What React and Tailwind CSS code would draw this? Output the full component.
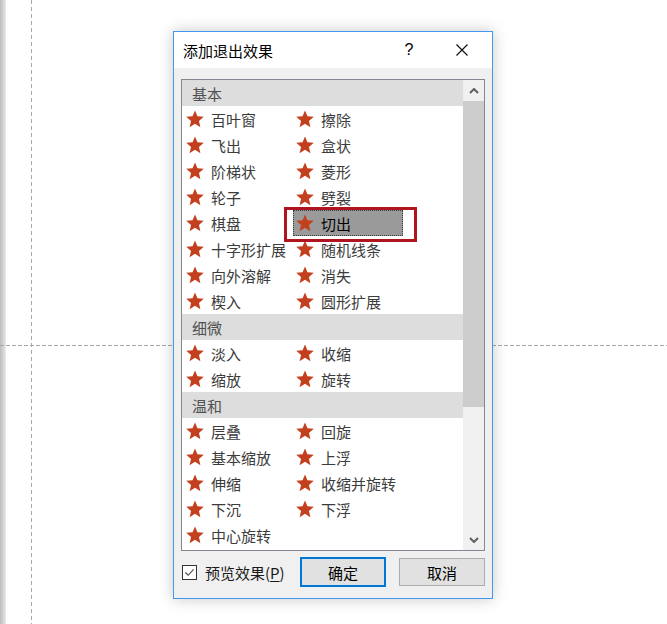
// App.jsx
const FONT = "font-['Microsoft_YaHei','Noto_Sans_CJK_SC',sans-serif]";

const groups = [
  {
    title: "基本",
    items: ["百叶窗", "擦除", "飞出", "盒状", "阶梯状", "菱形", "轮子", "劈裂", "棋盘", "切出", "十字形扩展", "随机线条", "向外溶解", "消失", "楔入", "圆形扩展"],
  },
  { title: "细微", items: ["淡入", "收缩", "缩放", "旋转"] },
  { title: "温和", items: ["层叠", "回旋", "基本缩放", "上浮", "伸缩", "收缩并旋转", "下沉", "下浮", "中心旋转"] },
];

const Star = () => (
  <svg viewBox="0 0 16 16" className="w-[18px] h-[18px] shrink-0 -ml-px">
    <polygon
      points="8,0.4 10.17,5.61 15.8,6.07 11.52,9.74 12.82,15.23 8,12.3 3.18,15.23 4.48,9.74 0.2,6.07 5.83,5.61"
      fill="#c3401f"
    />
  </svg>
);

const Chevron = ({ down }) => (
  <svg viewBox="0 0 10 6" className="w-[10px] h-[6px]">
    <polyline
      points={down ? "1,1 5,5 9,1" : "1,5 5,1 9,5"}
      fill="none"
      stroke="#5f5f5f"
      strokeWidth="2"
    />
  </svg>
);

const Item = ({ label }) => {
  const selected = label === "切出";
  return (
    <div
      className={
        "h-[26px] w-[110px] flex items-center gap-[7px] pl-1 " +
        (selected ? "bg-[#9a9a9a] outline-1 outline-dotted outline-[#3a3a3a] -outline-offset-1 text-black" : "text-[#3c3c3c]")
      }
    >
      <Star />
      <span className="text-[15px] leading-none whitespace-nowrap">{label}</span>
    </div>
  );
};

export default function App() {
  return (
    <div className={`relative w-[667px] h-[624px] overflow-hidden bg-white ${FONT}`}>
      {/* canvas edge + guides */}
      <div className="absolute left-0 top-0 h-full w-[6px] bg-linear-to-r from-[#bcbcbc] to-[#e9e9e9]" />
      <div className="absolute left-[31px] top-0 h-full w-px bg-[repeating-linear-gradient(to_bottom,#a8a8a8_0_4px,transparent_4px_7px)]" />
      <div className="absolute left-0 top-[345px] w-full h-px bg-[repeating-linear-gradient(to_right,#a8a8a8_0_4px,transparent_4px_6px)]" />

      {/* dialog */}
      <div className="absolute left-[173px] top-[31px] w-[320px] h-[568px] border border-[#4497ee] bg-[#f0f0f0] flex flex-col shadow-[0_0_14px_rgba(0,0,0,0.22)]">
        <div className="h-[36px] bg-white flex items-center pl-[9px] shrink-0">
          <span className="text-[15px] text-black leading-none">添加退出效果</span>
          <span className="ml-auto w-[20px] text-center text-[16px] leading-none text-black font-['Liberation_Sans',sans-serif] mr-[37px]">?</span>
          <svg viewBox="0 0 12 12" className="w-[12px] h-[12px] mr-[24px]">
            <path d="M0.5 0.5L11.5 11.5M11.5 0.5L0.5 11.5" stroke="#111" strokeWidth="1.2" />
          </svg>
        </div>

        <div className="flex-1 px-[7px] pt-[11px] flex flex-col">
          {/* list */}
          <div className="h-[472px] border border-[#828790] bg-white flex overflow-hidden">
            <div className="w-[281px]">
              {groups.map((g) => (
                <div key={g.title}>
                  <div className="h-[26px] bg-[#dddddd] flex items-center pl-[10px] text-[15px] leading-none text-[#505050]">
                    {g.title}
                  </div>
                  <div className="grid grid-cols-[110px_110px] pl-px">
                    {g.items.map((it) => (
                      <Item key={it} label={it} />
                    ))}
                  </div>
                </div>
              ))}
            </div>
            <div className="w-[21px] bg-[#f0f0f0] flex flex-col">
              <div className="h-[21px] flex items-center justify-center">
                <Chevron />
              </div>
              <div className="h-[306px] bg-[#cdcdcd]" />
              <div className="flex-1" />
              <div className="h-[21px] flex items-center justify-center">
                <Chevron down />
              </div>
            </div>
          </div>

          {/* footer */}
          <div className="mt-[6px] h-[30px] flex items-center">
            <div className="ml-px w-[15px] h-[15px] border border-[#333333] bg-white flex items-center justify-center">
              <svg viewBox="0 0 12 12" className="w-[11px] h-[11px]">
                <polyline points="1.5,6 4.5,9 10.5,2.5" fill="none" stroke="#4a4a4a" strokeWidth="1.2" />
              </svg>
            </div>
            <span className="ml-[8px] text-[15px] leading-none text-[#1a1a1a]">
              预览效果(<span className="underline underline-offset-2">P</span>)
            </span>
            <button className="ml-auto w-[86px] h-[30px] border-2 border-[#0078d7] bg-[#e1e1e1] text-[15px] leading-none text-black">
              确定
            </button>
            <button className="ml-[13px] w-[86px] h-[28px] border border-[#adadad] bg-[#e1e1e1] text-[15px] leading-none text-black">
              取消
            </button>
          </div>
        </div>
      </div>

      {/* annotation around selected item */}
      <div className="absolute left-[284px] top-[207px] w-[133px] h-[35px] border-[3px] border-[#b0141e]" />
    </div>
  );
}
